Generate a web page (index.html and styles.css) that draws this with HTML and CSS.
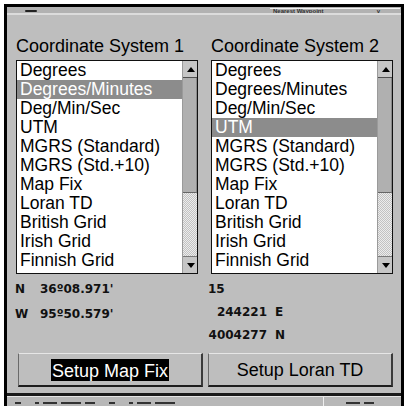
FILE: index.html
```html
<!DOCTYPE html>
<html>
<head>
<meta charset="utf-8">
<link rel="stylesheet" href="styles.css">
</head>
<body>
<div class="frame">
  <div class="topstrip">
    <span class="dash"></span>
    <div class="topbox"><span class="tiny">Nearest Waypoint</span><span class="tinymark">v</span></div>
  </div>
  <div class="dialog">
    <div class="cols">
      <div class="col">
        <div class="title">Coordinate System 1</div>
        <div class="listbox">
          <ul class="items">
            <li>Degrees</li>
            <li class="sel">Degrees/Minutes</li>
            <li>Deg/Min/Sec</li>
            <li>UTM</li>
            <li>MGRS (Standard)</li>
            <li>MGRS (Std.+10)</li>
            <li>Map Fix</li>
            <li>Loran TD</li>
            <li>British Grid</li>
            <li>Irish Grid</li>
            <li>Finnish Grid</li>
          </ul>
          <div class="scroll">
            <div class="sbtn up"><span class="tri-up"></span></div>
            <div class="thumb"></div>
            <div class="track"></div>
            <div class="sbtn down"><span class="tri-down"></span></div>
          </div>
        </div>
      </div>
      <div class="col">
        <div class="title">Coordinate System 2</div>
        <div class="listbox">
          <ul class="items">
            <li>Degrees</li>
            <li>Degrees/Minutes</li>
            <li>Deg/Min/Sec</li>
            <li class="sel">UTM</li>
            <li>MGRS (Standard)</li>
            <li>MGRS (Std.+10)</li>
            <li>Map Fix</li>
            <li>Loran TD</li>
            <li>British Grid</li>
            <li>Irish Grid</li>
            <li>Finnish Grid</li>
          </ul>
          <div class="scroll">
            <div class="sbtn up"><span class="tri-up"></span></div>
            <div class="thumb"></div>
            <div class="track"></div>
            <div class="sbtn down"><span class="tri-down"></span></div>
          </div>
        </div>
      </div>
    </div>
    <div class="coords">
      <div class="cleft">
        <div class="crow"><span class="hem">N</span><span>36º08.971'</span></div>
        <div class="crow"><span class="hem">W</span><span>95º50.579'</span></div>
      </div>
      <div class="cright">
        <div class="crow">15</div>
        <div class="crow"><span class="num">244221</span><span class="let">E</span></div>
        <div class="crow"><span class="num">4004277</span><span class="let">N</span></div>
      </div>
    </div>
    <div class="buttons">
      <div class="btn"><span class="focus">Setup Map Fix</span></div>
      <div class="btn">Setup Loran TD</div>
    </div>
  </div>
  <div class="bottom">
    <div class="bline"></div>
    <div class="bcells">
      <div class="bcell left">
        <span class="frag w6"></span><span class="frag w4 gap"></span><span class="frag w14"></span><span class="frag w20"></span><span class="frag w10"></span><span class="frag w6 gap"></span><span class="frag w4 gap"></span><span class="frag w14"></span><span class="frag w20"></span>
      </div>
      <div class="bcell right">
        <span class="frag w14"></span><span class="frag w10"></span>
      </div>
    </div>
  </div>
</div>
</body>
</html>
```
FILE: styles.css
```css
html, body {
  margin: 0;
  height: 406px;
  overflow: hidden;
  background: #ffffff;
}

.frame {
  margin: 4px 0 0 4px;
  width: 394px;
  height: 410px;
  border: 3px solid #000;
  border-bottom: none;
  display: flex;
  flex-direction: column;
  background: #bebebe;
  font-family: "Liberation Sans", Arial, sans-serif;
  color: #000;
}

.topstrip {
  height: 6px;
  background: #b2b2b2;
  border-bottom: 2px solid #dcdcdc;
  display: flex;
  align-items: flex-end;
  overflow: hidden;
}

.dash {
  width: 12px;
  height: 2px;
  background: #222;
  border-radius: 1px;
  margin-left: 18px;
  margin-bottom: 1px;
}

.topbox {
  margin-left: auto;
  margin-right: 1px;
  width: 107px;
  height: 4px;
  border-top: 1px solid #f4f4f4;
  display: flex;
  justify-content: space-between;
  overflow: hidden;
  font-size: 6px;
  line-height: 5px;
  font-weight: bold;
  color: #333;
  padding: 0 20px 0 3px;
}

.dialog {
  padding-top: 21px;
}

.cols {
  display: grid;
  grid-template-columns: 182px 182px;
  column-gap: 13px;
  padding-left: 9px;
}

.title {
  font-size: 18px;
  line-height: 20px;
  height: 20px;
  margin-bottom: 4px;
  white-space: nowrap;
}

.listbox {
  display: flex;
  height: 212px;
  border: 1px solid #111;
  background: #fff;
}

.items {
  flex: 1;
  margin: 0;
  padding: 0;
  list-style: none;
  font-size: 17.5px;
}

.items li {
  height: 19px;
  line-height: 19px;
  padding-left: 3px;
  white-space: nowrap;
}

.items li.sel {
  background: #8c8c8c;
  color: #fff;
}

.scroll {
  width: 14px;
  border-left: 1px solid #9a9a9a;
  display: flex;
  flex-direction: column;
  background: #b8b8b8;
}

.sbtn {
  height: 16px;
  background: #c6c6c6;
  display: flex;
  align-items: center;
  justify-content: center;
  padding-left: 1px;
}

.sbtn.up {
  border-bottom: 1px solid #505050;
}

.sbtn.down {
  border-top: 1px solid #7a7a7a;
}

.tri-up {
  width: 0;
  height: 0;
  border-left: 4px solid transparent;
  border-right: 4px solid transparent;
  border-bottom: 5px solid #000;
}

.tri-down {
  width: 0;
  height: 0;
  border-left: 4px solid transparent;
  border-right: 4px solid transparent;
  border-top: 5px solid #000;
}

.thumb {
  height: 114px;
  background: #b0b0b0;
  border-bottom: 1px solid #666;
  border-right: 1px solid #8a8a8a;
}

.track {
  flex: 1;
  background-color: #dcdcdc;
  background-image: repeating-conic-gradient(#c2c2c2 0 25%, #ececec 0 50%);
  background-size: 2px 2px;
}

.coords {
  display: grid;
  grid-template-columns: 193px 1fr;
  padding-left: 8px;
  padding-top: 8px;
  height: 79px;
  box-sizing: border-box;
  font-family: "DejaVu Sans", Verdana, sans-serif;
  font-weight: bold;
  font-size: 12px;
  color: #111;
}

.cleft {
  display: flex;
  flex-direction: column;
  gap: 11px;
}

.cright {
  display: flex;
  flex-direction: column;
  gap: 9px;
}

.crow {
  height: 14px;
  line-height: 14px;
  white-space: nowrap;
}

.hem {
  display: inline-block;
  width: 25px;
}

.num {
  display: inline-block;
  width: 59px;
  text-align: right;
}

.let {
  margin-left: 8px;
}

.buttons {
  display: flex;
  gap: 5px;
  padding-left: 11px;
  margin-bottom: 6px;
}

.btn {
  width: 185px;
  height: 34px;
  box-sizing: border-box;
  border-top: 1px solid #e6e6e6;
  border-left: 1px solid #6a6a6a;
  border-right: 2px solid #3a3a3a;
  border-bottom: 2px solid #1e1e1e;
  display: flex;
  align-items: center;
  justify-content: center;
  font-size: 18px;
  line-height: 20px;
  white-space: nowrap;
}

.focus {
  background: #000;
  color: #fff;
  padding: 2px 1px 0 1px;
}

.bottom {
  border-top: 3px solid #1a1a1a;
  background: #b8b8b8;
  flex: 1;
}

.bline {
  height: 1px;
  background: #e6e6e6;
}

.bcells {
  display: flex;
  height: 20px;
}

.bcell {
  display: flex;
  align-items: flex-start;
  gap: 4px;
  padding-top: 5px;
}

.bcell.left {
  width: 317px;
  padding-left: 8px;
  box-sizing: border-box;
  border-right: 1px solid #eeeeee;
}

.bcell.right {
  padding-left: 22px;
}

.frag {
  height: 2px;
  background: #333;
}

.frag.gap {
  margin-left: 10px;
}

.w4 { width: 4px; }
.w6 { width: 6px; }
.w10 { width: 10px; }
.w14 { width: 14px; }
.w20 { width: 20px; }
```
